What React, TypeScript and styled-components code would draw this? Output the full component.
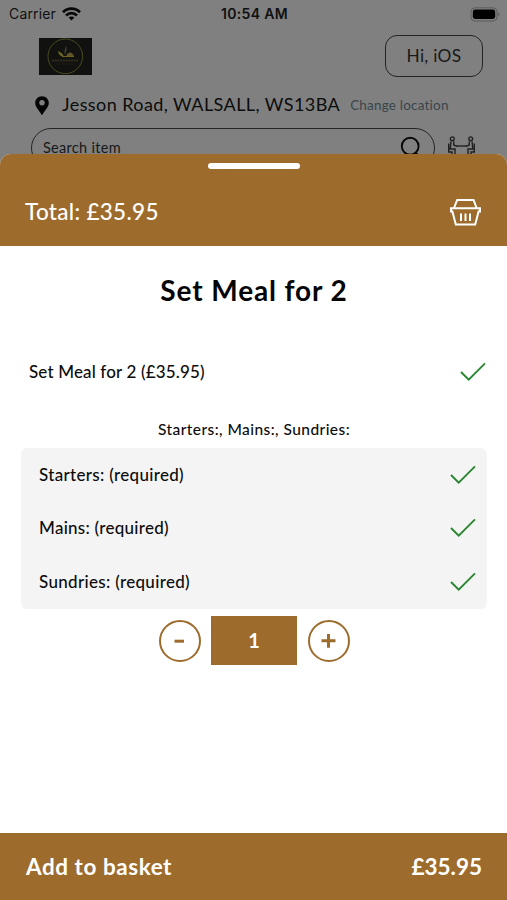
import React from "react";
import styled, { createGlobalStyle } from "styled-components";

const BROWN = "#9d6c2c";
const GREEN = "#27862f";

const GlobalStyle = createGlobalStyle`
  * { box-sizing: border-box; }
  body { margin: 0; background: #808080; font-family: Lato, "Open Sans", sans-serif; color: #0c0c0c; font-variant-ligatures: none; }
  button { font-family: inherit; padding: 0; border: 0; background: none; color: inherit; }
`;

const Screen = styled.div`
  width: 507px;
  height: 900px;
  display: flex;
  flex-direction: column;
  overflow: hidden;
  background: #808080;
`;

const Text = styled.span<{ $size: number; $spacing?: number; $weight?: number }>`
  font-size: ${(p) => p.$size}px;
  letter-spacing: ${(p) => p.$spacing ?? 0}px;
  font-weight: ${(p) => p.$weight ?? 400};
  line-height: 1.2;
  white-space: nowrap;
`;

const Backdrop = styled.div`
  height: 154px;
  flex: none;
  overflow: hidden;
`;

const StatusBar = styled.div`
  height: 28px;
  display: grid;
  grid-template-columns: 1fr auto 1fr;
  align-items: center;
  padding: 0 7px 0 9px;
  font-family: Inter, sans-serif;
  color: #101010;
`;

const Carrier = styled.div`
  display: flex;
  align-items: center;
  gap: 6px;
`;

const BatterySlot = styled.div`
  display: flex;
  justify-content: flex-end;
`;

const BrandRow = styled.div`
  height: 56px;
  display: flex;
  align-items: center;
  justify-content: space-between;
  padding: 0 24px 0 39px;
`;

const Greeting = styled.button`
  width: 98px;
  height: 42px;
  border: 1.5px solid #242424;
  border-radius: 12px;
  color: #181818;
`;

const LocationRow = styled.div`
  height: 42px;
  display: flex;
  align-items: center;
  padding-left: 35px;
`;

const Address = styled(Text)`
  margin-left: 13px;
`;

const ChangeLink = styled(Text)`
  margin-left: 10px;
  color: #38464b;
`;

const SearchRow = styled.div`
  display: flex;
  align-items: flex-start;
  padding: 2px 0 0 31px;
  gap: 12px;
`;

const SearchBox = styled.div`
  width: 404px;
  height: 40px;
  display: flex;
  align-items: center;
  justify-content: space-between;
  padding: 0 12px 0 11px;
  border: 1.5px solid #242424;
  border-radius: 20px;
  color: #181818;
`;

const SearchText = styled(Text)`
  line-height: 13px;
  margin-bottom: 2px;
`;

const TableIcon = styled.svg`
  margin-top: 8px;
`;

const Sheet = styled.main`
  flex: 1;
  display: flex;
  flex-direction: column;
  background: #fff;
  border-radius: 11px 11px 0 0;
  overflow: hidden;
`;

const SheetHeader = styled.header`
  height: 92px;
  flex: none;
  display: flex;
  flex-direction: column;
  background: ${BROWN};
  color: #fff;
`;

const Grabber = styled.div`
  width: 92px;
  height: 6px;
  margin: 9px auto 0;
  border-radius: 3px;
  background: #fff;
`;

const TotalRow = styled.div`
  display: flex;
  align-items: center;
  justify-content: space-between;
  height: 44px;
  margin-top: 21px;
  padding: 0 26px 0 25px;
`;

const Total = styled(Text)`
  padding-bottom: 2px;
`;

const Body = styled.section`
  flex: 1;
  display: flex;
  flex-direction: column;
  padding: 0 20px 0 21px;
`;

const Title = styled.h1`
  margin: 27px 0 0;
  height: 36px;
  display: flex;
  justify-content: center;
  align-items: center;
  color: #050505;
`;

const MealRow = styled.div`
  height: 54px;
  margin-top: 36px;
  padding: 0 1px 0 8px;
  display: flex;
  align-items: center;
  justify-content: space-between;
`;

const Summary = styled.div`
  height: 20px;
  margin: 20px 0 9px;
  display: flex;
  align-items: center;
  justify-content: center;
`;

const OptionList = styled.div`
  height: 161px;
  border-radius: 6px;
  background: #f4f4f4;
  display: grid;
  grid-template-rows: repeat(3, 1fr);
`;

const OptionRow = styled.div`
  display: flex;
  align-items: center;
  justify-content: space-between;
  padding: 0 11px 0 18px;
`;

const Stepper = styled.div`
  display: flex;
  align-items: center;
  justify-content: center;
  gap: 10.5px;
  margin-top: 7px;
`;

const StepButton = styled.button`
  width: 42px;
  height: 42px;
  display: grid;
  place-items: center;
  border: 2px solid ${BROWN};
  border-radius: 50%;
`;

const Quantity = styled.div`
  width: 86px;
  height: 49px;
  display: grid;
  place-items: center;
  padding-bottom: 2px;
  background: ${BROWN};
  color: #fff;
`;

const Footer = styled.footer`
  height: 67px;
  flex: none;
  display: flex;
  align-items: center;
  justify-content: space-between;
  padding: 0 25px 0 26px;
  background: ${BROWN};
  color: #fff;
`;

const Check = () => (
  <svg width="26" height="20" viewBox="0 0 26 20" fill="none" stroke={GREEN} strokeWidth="1.9">
    <path d="M1 10 L8.7 17.6 L25 1.3" />
  </svg>
);

const Wifi = () => (
  <svg width="19" height="14" viewBox="0 0 19 14" fill="none" stroke="#080808" strokeWidth="2.7">
    <path d="M1 5.2 C5.7 .4 13.3 .4 18 5.2" />
    <path d="M4 8.4 C7.2 5.4 11.8 5.4 15 8.4" />
    <path d="M9.5 13.6 L6.6 10.5 C8.2 9 10.8 9 12.4 10.5 Z" fill="#080808" stroke="none" />
  </svg>
);

const Battery = () => (
  <svg width="30" height="15" viewBox="0 0 30 15">
    <rect x="1" y=".8" width="26" height="13.2" rx="4" fill="none" stroke="#5c5c5c" />
    <rect x="2.8" y="2.6" width="22.4" height="9.4" rx="2.4" fill="#000" />
    <path d="M28.3 5.2 Q30.4 7.3 28.3 9.5 Z" fill="#555" />
  </svg>
);

const Logo = () => (
  <svg width="53" height="37" viewBox="0 0 53 37">
    <rect width="53" height="37" fill="#11110f" />
    <circle cx="26.3" cy="18.3" r="17.3" fill="none" stroke="#4b4a20" strokeWidth="1" />
    <path d="M19 13 Q19.5 18 25 19 Q24 15 19 13Z" fill="#6e6a22" />
    <path d="M26 17 Q24.5 12 27.5 7.5 Q28 13 26 17Z" fill="#3c4426" />
    <path d="M27 18.5 Q29 13 33 15 L35 18 Z" fill="#5d5529" />
    <path d="M23 18.5 H35" stroke="#6a6225" strokeWidth="1" />
    <path d="M13 22.5 H39" stroke="#302e1c" strokeWidth="2" strokeDasharray="2 .7" />
    <path d="M17 26 H36" stroke="#24231a" strokeWidth="1.2" strokeDasharray="2 1" />
  </svg>
);

const Pin = () => (
  <svg width="14" height="19" viewBox="0 0 14 19">
    <path
      fill="#050505"
      fillRule="evenodd"
      d="M7 .3C3.1.3.2 3.2.2 6.9c0 4 4 7.4 6 11.3.4.7 1.2.7 1.6 0 2-3.9 6-7.3 6-11.3C13.8 3.2 10.9.3 7 .3Zm0 3.8a2.7 2.7 0 1 1 0 5.4 2.7 2.7 0 0 1 0-5.4Z"
    />
  </svg>
);

const SearchIcon = () => (
  <svg width="22" height="24" viewBox="0 0 22 24" fill="none" stroke="#080808" strokeWidth="1.9">
    <circle cx="10.2" cy="10.2" r="8.4" />
    <path d="M15.3 16 L20 21.5" />
  </svg>
);

const Diners = () => (
  <TableIcon width="29" height="24" viewBox="0 0 29 24" fill="none" stroke="#202020" strokeWidth="1.4">
    <circle cx="5.3" cy="2.8" r="1.9" />
    <circle cx="23.7" cy="2.8" r="1.9" />
    <path d="M3.9 5.5 L3.2 13 H8 V20 M6.7 5.5 L6.8 9 L9.8 10.3 M1.7 7.5 V16 H5 V20" />
    <path d="M25.1 5.5 L25.8 13 H21 V20 M22.3 5.5 L22.2 9 L19.2 10.3 M27.3 7.5 V16 H24 V20" />
    <path d="M9 10 H20" />
  </TableIcon>
);

const Basket = () => (
  <svg width="32" height="28" viewBox="0 0 32 28" fill="none" stroke="#fff" strokeWidth="2">
    <path d="M5 10 L8.2 2 H24.6 L27.6 10" />
    <path d="M2 10.2 H31 V13.5 H29.6 L26.2 26.4 H6.8 L3.4 13.5 H2 Z" />
    <path d="M12 15.5 V23 M16.5 15.5 V23 M21 15.5 V23" />
  </svg>
);

const StepGlyph = ({ plus }: { plus?: boolean }) => (
  <svg width="15" height="15" viewBox="0 0 15 15" stroke={BROWN} strokeWidth="3">
    {plus ? <path d="M.5 7.8 H14.5 M7.5 1 V14.7" /> : <path d="M2.5 8.2 H12" />}
  </svg>
);

const options = [
  { label: "Starters: (required)", spacing: 0.32 },
  { label: "Mains: (required)", spacing: 0.27 },
  { label: "Sundries: (required)", spacing: 0.32 },
];

export default function App() {
  return (
    <Screen>
      <GlobalStyle />
      <Backdrop>
        <StatusBar>
          <Carrier>
            <Text $size={14} $spacing={0.15}>Carrier</Text>
            <Wifi />
          </Carrier>
          <Text $size={14} $weight={600} $spacing={0.35}>10:54 AM</Text>
          <BatterySlot><Battery /></BatterySlot>
        </StatusBar>
        <BrandRow>
          <Logo />
          <Greeting><Text $size={17.3} $spacing={0.3}>Hi, iOS</Text></Greeting>
        </BrandRow>
        <LocationRow>
          <Pin />
          <Address $size={18} $spacing={0.42}>Jesson Road, WALSALL, WS13BA</Address>
          <ChangeLink $size={13.5} $spacing={0.2}>Change location</ChangeLink>
        </LocationRow>
        <SearchRow>
          <SearchBox>
            <SearchText $size={14.5} $spacing={0.3}>Search item</SearchText>
            <SearchIcon />
          </SearchBox>
          <Diners />
        </SearchRow>
      </Backdrop>
      <Sheet>
        <SheetHeader>
          <Grabber />
          <TotalRow>
            <Total $size={22.5} $weight={500} $spacing={0.3}>Total: £35.95</Total>
            <Basket />
          </TotalRow>
        </SheetHeader>
        <Body>
          <Title><Text $size={28} $weight={700} $spacing={0.88}>Set Meal for 2</Text></Title>
          <MealRow>
            <Text $size={17} $weight={500} $spacing={0.15}>Set Meal for 2 (£35.95)</Text>
            <Check />
          </MealRow>
          <Summary><Text $size={15.5} $weight={500} $spacing={0.44}>Starters:, Mains:, Sundries:</Text></Summary>
          <OptionList>
            {options.map((o) => (
              <OptionRow key={o.label}>
                <Text $size={17} $weight={500} $spacing={o.spacing}>{o.label}</Text>
                <Check />
              </OptionRow>
            ))}
          </OptionList>
          <Stepper>
            <StepButton aria-label="Decrease"><StepGlyph /></StepButton>
            <Quantity><Text $size={20} $weight={700}>1</Text></Quantity>
            <StepButton aria-label="Increase"><StepGlyph plus /></StepButton>
          </Stepper>
        </Body>
        <Footer>
          <Text $size={22.5} $weight={700} $spacing={0.55}>Add to basket</Text>
          <Text $size={22.5} $weight={700}>£35.95</Text>
        </Footer>
      </Sheet>
    </Screen>
  );
}
